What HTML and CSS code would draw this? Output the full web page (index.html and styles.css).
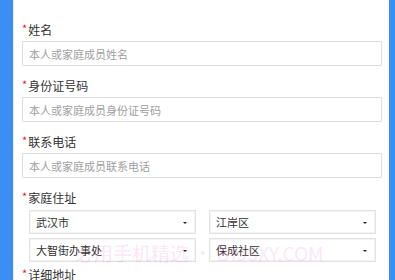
FILE: index.html
```html
<!DOCTYPE html>
<html>
<head>
<meta charset="utf-8">
<title>家庭成员信息</title>
<link rel="stylesheet" href="styles.css">
</head>
<body>

<div class="panel">
	<div class="field">
		<label class="lbl"><i>*</i>姓名</label>
		<input class="txt" type="text" placeholder="本人或家庭成员姓名">
	</div>
	<div class="field">
		<label class="lbl"><i>*</i>身份证号码</label>
		<input class="txt" type="text" placeholder="本人或家庭成员身份证号码">
	</div>
	<div class="field">
		<label class="lbl"><i>*</i>联系电话</label>
		<input class="txt" type="text" placeholder="本人或家庭成员联系电话">
	</div>
	<div class="field">
		<label class="lbl"><i>*</i>家庭住址</label>
		<div class="area">
			<div class="sel">武汉市<b></b></div>
			<div class="sel">江岸区<b></b></div>
			<div class="sel">大智街办事处<b></b></div>
			<div class="sel">保成社区<b></b></div>
		</div>
	</div>
	<div class="field last">
		<label class="lbl"><i>*</i>详细地址</label>
	</div>
</div>

<div class="mark">必用手机精选 • BYJSXY.COM</div>

</body>
</html>
```

FILE: styles.css
```css
body { margin: 0; padding: 0; background-color: #3b8ef3; font: normal 12px/1.4 "Noto Sans CJK SC", "Noto Sans", sans-serif; color: #333; overflow: hidden; }
.panel { margin: 0 6px 0 13px; padding: 10px 7px 20px 8px; background-color: #fff; border-left: 1px solid #e8eef5; height: 280px; box-sizing: border-box; }
.field { padding-top: 7px; }
.field.last { padding-top: 0; }
.lbl { display: block; height: 22px; line-height: 22px; font-size: 12px; color: #333; }
.lbl i { font-style: normal; color: #e02020; font-size: 11px; vertical-align: 2px; margin-right: 1px; }
.txt { display: block; width: 100%; height: 25px; margin-top: 2px; padding: 0 6px; box-sizing: border-box; border: 1px solid #dcdcdc; border-radius: 1px; font: normal 11px "Noto Sans CJK SC", sans-serif; color: #333; background-color: #fff; outline: none; }
.txt::placeholder { color: #a0a0a0; }
.area { display: grid; grid-template-columns: 1fr 1fr; column-gap: 13px; row-gap: 4px; margin: 3px 6px 0 7px; }
.sel { position: relative; height: 24px; line-height: 22px; padding: 0 6px; box-sizing: border-box; border: 1px solid #e2e2e2; box-shadow: inset 0 0 0 1px #f3f3f3; font-size: 11px; color: #333; }
.sel b { position: absolute; right: 8px; top: 11px; width: 0; height: 0; border-left: 2px solid transparent; border-right: 2px solid transparent; border-top: 2px solid #222; }
.mark { position: absolute; left: 75px; top: 243px; font: normal 19px/1 "Noto Sans CJK SC", sans-serif; color: #e040c0; opacity: 0.12; white-space: nowrap; pointer-events: none; }
```
